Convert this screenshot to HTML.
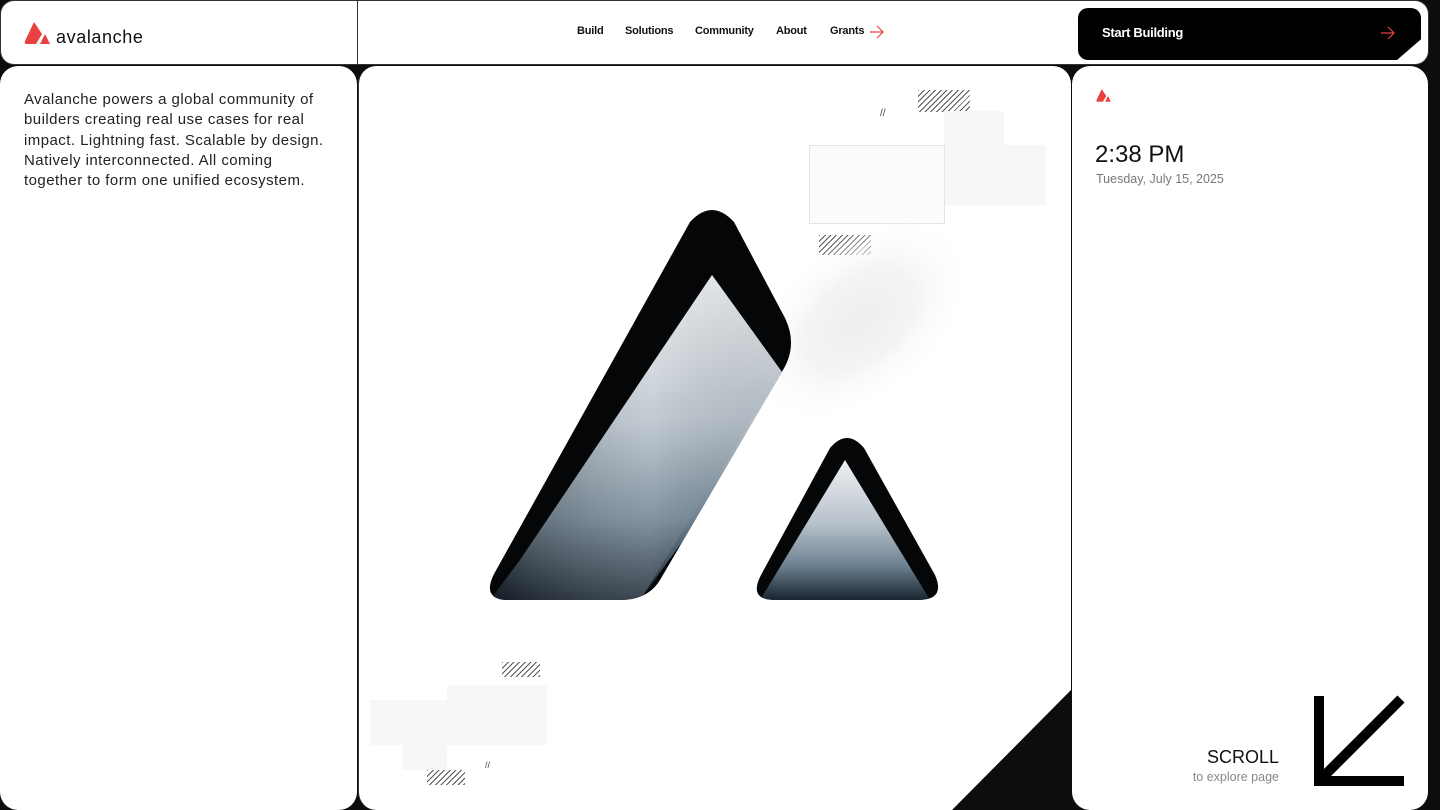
<!DOCTYPE html>
<html><head><meta charset="utf-8"><style>
*{margin:0;padding:0;box-sizing:border-box}
html,body{width:1440px;height:810px;overflow:hidden}
body{background:#0d0d0d;position:relative;font-family:"Liberation Sans",sans-serif;color:#111}
.p{position:absolute;background:#fff}
.nav a{position:absolute;top:25px;font-size:11px;font-weight:bold;color:#111;text-decoration:none;letter-spacing:-0.2px}
.hatch{position:absolute;background:repeating-linear-gradient(135deg,#555 0 1px,#fff 1px 4px)}
.ghost{position:absolute;background:#f7f7f7}
</style></head><body>
<!-- header -->
<div class="p" style="left:0;top:0;width:357px;height:65px;border-radius:14px 0 0 14px;border:1px solid #333;border-right:none"></div>
<div class="p" style="left:357px;top:0;width:715px;height:65px;border:1px solid #333"></div>
<div class="p" style="left:1071px;top:0;width:358px;height:65px;border-radius:0 14px 14px 0;border:1px solid #333;border-left:none"></div>
<svg style="position:absolute;left:24px;top:22px" width="28" height="24" viewBox="0 0 28 24"><path d="M10 0 L1 19 Q0 22 3 22 L12 22 L18 12 Z" fill="#e84142"/><path d="M21 12 L16 22 L26 22 Z" fill="#e84142"/></svg>
<div style="position:absolute;left:56px;top:27px;font-size:18px;letter-spacing:0.6px">avalanche</div>
<div class="nav"><a style="left:577px">Build</a><a style="left:625px">Solutions</a><a style="left:695px">Community</a><a style="left:776px">About</a><a style="left:830px">Grants</a></div>
<svg style="position:absolute;left:869px;top:25px" width="16" height="14" viewBox="0 0 16 14"><path d="M1 7H14M8 1L14 7L8 13" stroke="#e84142" stroke-width="1.2" fill="none"/></svg>
<div style="position:absolute;left:1078px;top:8px;width:343px;height:52px;background:#000;border-radius:10px;clip-path:polygon(0 0,100% 0,100% 60%,calc(100% - 24px) 100%,0 100%)"></div>
<div style="position:absolute;left:1102px;top:25px;font-size:13px;font-weight:bold;color:#fff;letter-spacing:-0.3px">Start Building</div>
<svg style="position:absolute;left:1380px;top:26px" width="16" height="14" viewBox="0 0 16 14"><path d="M1 7H14M8 1L14 7L8 13" stroke="#e84142" stroke-width="1.2" fill="none"/></svg>
<!-- panels -->
<div class="p" style="left:0;top:66px;width:357px;height:744px;border-radius:18px"></div>
<div class="p" style="left:358px;top:66px;width:713px;height:744px;border-radius:18px;border-left:1px solid #333;clip-path:polygon(0 0,100% 0,100% 624px,594px 744px,0 744px)"></div>
<div class="p" style="left:1072px;top:66px;width:356px;height:744px;border-radius:18px"></div>
<div style="position:absolute;left:24px;top:90px;width:305px;font-size:15px;line-height:20.3px;color:#222;letter-spacing:0.45px">Avalanche powers a global community of builders creating real use cases for real impact. Lightning fast. Scalable by design. Natively interconnected. All coming together to form one unified ecosystem.</div>
<svg style="position:absolute;left:1096px;top:89px" width="16" height="14" viewBox="0 0 28 24"><path d="M10 0 L1 19 Q0 22 3 22 L12 22 L18 12 Z" fill="#e84142"/><path d="M21 12 L16 22 L26 22 Z" fill="#e84142"/></svg>
<div style="position:absolute;left:1095px;top:141px;font-size:24px;color:#111">2:38 PM</div>
<div style="position:absolute;left:1096px;top:172px;font-size:12.5px;color:#777">Tuesday, July 15, 2025</div>
<div style="position:absolute;left:1150px;top:747px;width:129px;text-align:right;font-size:18px;color:#111">SCROLL</div>
<div style="position:absolute;left:1150px;top:770px;width:129px;text-align:right;font-size:12.5px;color:#888">to explore page</div>
<svg style="position:absolute;left:1312px;top:694px" width="96" height="94" viewBox="0 0 96 94"><path d="M7 2V87H92M8 86L89 5" stroke="#000" stroke-width="10" fill="none"/></svg>
<!-- decorations -->
<div class="hatch" style="left:918px;top:90px;width:52px;height:22px"></div>
<div class="ghost" style="left:944px;top:111px;width:60px;height:34px"></div>
<div style="position:absolute;left:809px;top:145px;width:136px;height:79px;border:1px solid #e4e4e4;background:#fbfbfb"></div>
<div class="ghost" style="left:945px;top:145px;width:101px;height:60px"></div>
<div class="hatch" style="left:819px;top:235px;width:52px;height:20px"></div>
<div style="position:absolute;left:880px;top:108px;font-size:10px;color:#444">//</div>
<div class="hatch" style="left:502px;top:662px;width:38px;height:15px"></div>
<div class="ghost" style="left:370px;top:700px;width:77px;height:45px"></div>
<div class="ghost" style="left:447px;top:685px;width:100px;height:60px"></div>
<div class="ghost" style="left:402px;top:745px;width:45px;height:25px"></div>
<div class="hatch" style="left:427px;top:770px;width:38px;height:15px"></div>
<div style="position:absolute;left:485px;top:760px;font-size:9px;color:#444">//</div>
<!-- logo -->
<svg style="position:absolute;left:0;top:0" width="1440" height="810" viewBox="0 0 1440 810">
<defs>
<radialGradient id="fog" cx="0.5" cy="0.5" r="0.5"><stop offset="0" stop-color="#ededed"/><stop offset=".5" stop-color="#f4f4f4"/><stop offset="1" stop-color="#fff" stop-opacity="0"/></radialGradient>
<linearGradient id="m" x1="0" y1="0" x2="0" y2="1"><stop offset="0" stop-color="#eef0f2"/><stop offset=".45" stop-color="#b8c2cb"/><stop offset=".75" stop-color="#6e8292"/><stop offset="1" stop-color="#182430"/></linearGradient>
<linearGradient id="m2" x1="0" y1="0" x2="1" y2="0"><stop offset="0" stop-color="#000" stop-opacity=".3"/><stop offset=".55" stop-color="#fff" stop-opacity=".15"/><stop offset="1" stop-color="#000" stop-opacity=".05"/></linearGradient>
<clipPath id="c1"><path d="M690 222 Q712 198 734 222 L785 318 Q798 345 783 370 L660 580 Q648 600 620 600 L505 600 Q482 598 494 574 Z"/></clipPath>
<clipPath id="c2"><path d="M830 448 Q847 428 864 448 L935 575 Q946 600 918 600 L775 600 Q748 600 761 575 Z"/></clipPath>
</defs>
<ellipse cx="860" cy="320" rx="130" ry="80" transform="rotate(-40 860 320)" fill="url(#fog)"/>
<g clip-path="url(#c1)"><rect x="480" y="200" width="320" height="400" fill="#050607"/>
<path d="M712 275 L782 372 L800 380 L640 600 L490 600 L520 560 Z" fill="url(#m)"/>
<path d="M712 275 L782 372 L640 600 L490 600 L520 560 Z" fill="url(#m2)"/></g>
<g clip-path="url(#c2)"><rect x="750" y="430" width="200" height="175" fill="#050607"/>
<path d="M845 460 L930 600 L760 600 Z" fill="url(#m)"/></g>
</svg>
</body></html>
